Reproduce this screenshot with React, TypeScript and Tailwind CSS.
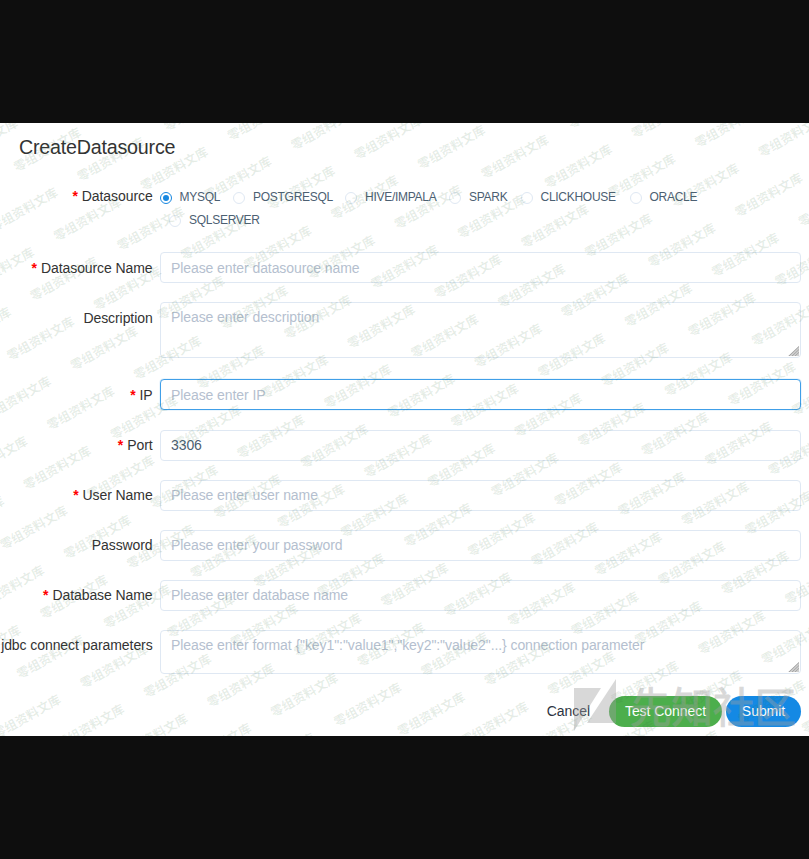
import React from "react";

const marks: { x: number; y: number }[] = [];
for (let n = -6; n < 16; n++) {
  for (let m = -6; m < 24; m++) {
    const x = 20 + m * 63.45 - n * 23.4;
    const y = 42 + m * 9.55 + n * 59.8;
    if (x > -70 && x < 812 && y > -6 && y < 650) marks.push({ x, y });
  }
}

function Watermark() {
  return (
    <svg className="pointer-events-none absolute inset-0" width="809" height="613" viewBox="0 0 809 613">
      <g fill="#2f6b3a" fillOpacity="0.125" fontSize="12.5" fontWeight="700" fontFamily="'Noto Sans CJK SC', sans-serif">
        {marks.map((p, i) => (
          <text key={i} transform={`translate(${p.x} ${p.y}) rotate(-29.5)`} x="-6.2" y="4.7">
            零组资料文库
          </text>
        ))}
      </g>
      <g fill="#a0a0a0" opacity="0.4">
        <path d="M574 565H601L574 608Z M616 556V600H587Z" />
        <text x="630" y="599.5" fontSize="41.5" stroke="#a0a0a0" strokeWidth="1" fontFamily="'Noto Sans CJK SC', sans-serif">
          先知社区
        </text>
      </g>
    </svg>
  );
}

function Row({ label, required, className, children }: { label: string; required?: boolean; className: string; children: React.ReactNode }) {
  return (
    <div className={`flex items-start ${className}`}>
      <div className="flex h-[32px] w-[152.6px] shrink-0 items-center justify-end whitespace-nowrap text-[14px] tracking-[-0.08px] text-[#333]">
        {required && <span className="mr-1 font-bold text-[#f00]">*</span>}
        {label}
      </div>
      {children}
    </div>
  );
}

function Field({ text, filled, focus }: { text: string; filled?: boolean; focus?: boolean }) {
  return (
    <div
      className={`ml-[7.4px] flex h-[31px] w-[641px] items-center rounded-[4px] border px-[10px] pt-px text-[14px] tracking-[-0.08px] ${
        focus ? "border-[#409fe8] shadow-[0_0_1px_#409fe8]" : "border-[#dfe8f3]"
      } ${filled ? "text-[#4c6072]" : "text-[#b5bfcf]"}`}
    >
      {text}
    </div>
  );
}

function Area({ text, className }: { text: string; className: string }) {
  return (
    <div className={`relative ml-[7.4px] w-[641px] rounded-[4px] border border-[#dfe8f3] px-[10px] pt-[4px] text-[14px] leading-5 tracking-[-0.08px] text-[#b5bfcf] ${className}`}>
      {text}
      <svg className="absolute right-px bottom-px" width="11" height="10" viewBox="0 0 11 10">
        <path d="M0 10L11 0V10Z" fill="#cfcfcf" />
        <path d="M1 10L11 .5M4 10L11 3.5M7 10L11 6.3" stroke="#a0a0a0" strokeWidth=".9" />
      </svg>
    </div>
  );
}

function Choice({ label, on, className }: { label: string; on?: boolean; className: string }) {
  return (
    <span className={`flex items-center gap-[7.5px] ${className}`}>
      <span className={`flex size-3 shrink-0 items-center justify-center rounded-full border ${on ? "border-[#1787e0]" : "border-[#dfe8f3]"}`}>
        {on && <span className="size-[6px] rounded-full bg-[#1787e0]" />}
      </span>
      {label}
    </span>
  );
}

export default function App() {
  return (
    <div className="h-[859px] w-[809px] overflow-hidden bg-[#0e0e0e] pt-[123px] font-['Liberation_Sans',Arial,sans-serif]">
      <div className="relative h-[613px] overflow-hidden bg-white">
        <h1 className="pt-[10px] pl-[19px] text-[19.7px] leading-7 tracking-[-0.22px] text-[#333]">CreateDatasource</h1>
        <Row label="Datasource" required className="mt-[19px] h-[72px]">
          <div className="ml-[7.4px] text-[12px] leading-[23px] tracking-[-0.27px] text-[#4c6072]">
            <div className="mt-[6px] flex h-[23px] whitespace-nowrap">
              <Choice label="MYSQL" on className="w-[73.5px]" />
              <Choice label="POSTGRESQL" className="w-[112px]" />
              <Choice label="HIVE/IMPALA" className="w-[104px]" />
              <Choice label="SPARK" className="w-[71.5px]" />
              <Choice label="CLICKHOUSE" className="w-[109px]" />
              <Choice label="ORACLE" className="" />
            </div>
            <Choice label="SQLSERVER" className="ml-[9.5px]" />
          </div>
        </Row>
        <Row label="Datasource Name" required className="h-[50.2px]">
          <Field text="Please enter datasource name" />
        </Row>
        <Row label="Description" className="h-[77.2px]">
          <Area text="Please enter description" className="h-[56px]" />
        </Row>
        <Row label="IP" required className="h-[50.2px]">
          <Field text="Please enter IP" focus />
        </Row>
        <Row label="Port" required className="h-[50.1px]">
          <Field text="3306" filled />
        </Row>
        <Row label="User Name" required className="h-[50.1px]">
          <Field text="Please enter user name" />
        </Row>
        <Row label="Password" className="h-[50.1px]">
          <Field text="Please enter your password" />
        </Row>
        <Row label="Database Name" required className="h-[50.1px]">
          <Field text="Please enter database name" />
        </Row>
        <Row label="jdbc connect parameters" className="h-[65.7px]">
          <Area text={'Please enter format {"key1":"value1","key2":"value2"...} connection parameter'} className="h-[44px]" />
        </Row>
        <div className="flex h-[31px] items-center justify-end pr-[8px] text-[14px] tracking-[-0.05px] text-white">
          <span className="mr-[19px] pt-px text-[#2d3442]">Cancel</span>
          <span className="mr-1 flex h-[31px] w-[113px] items-center justify-center rounded-full bg-[#4cae4c] pt-px">Test Connect</span>
          <span className="flex h-[31px] w-[75px] items-center justify-center rounded-full bg-[#1489e4] pt-px">Submit</span>
        </div>
        <Watermark />
      </div>
    </div>
  );
}
